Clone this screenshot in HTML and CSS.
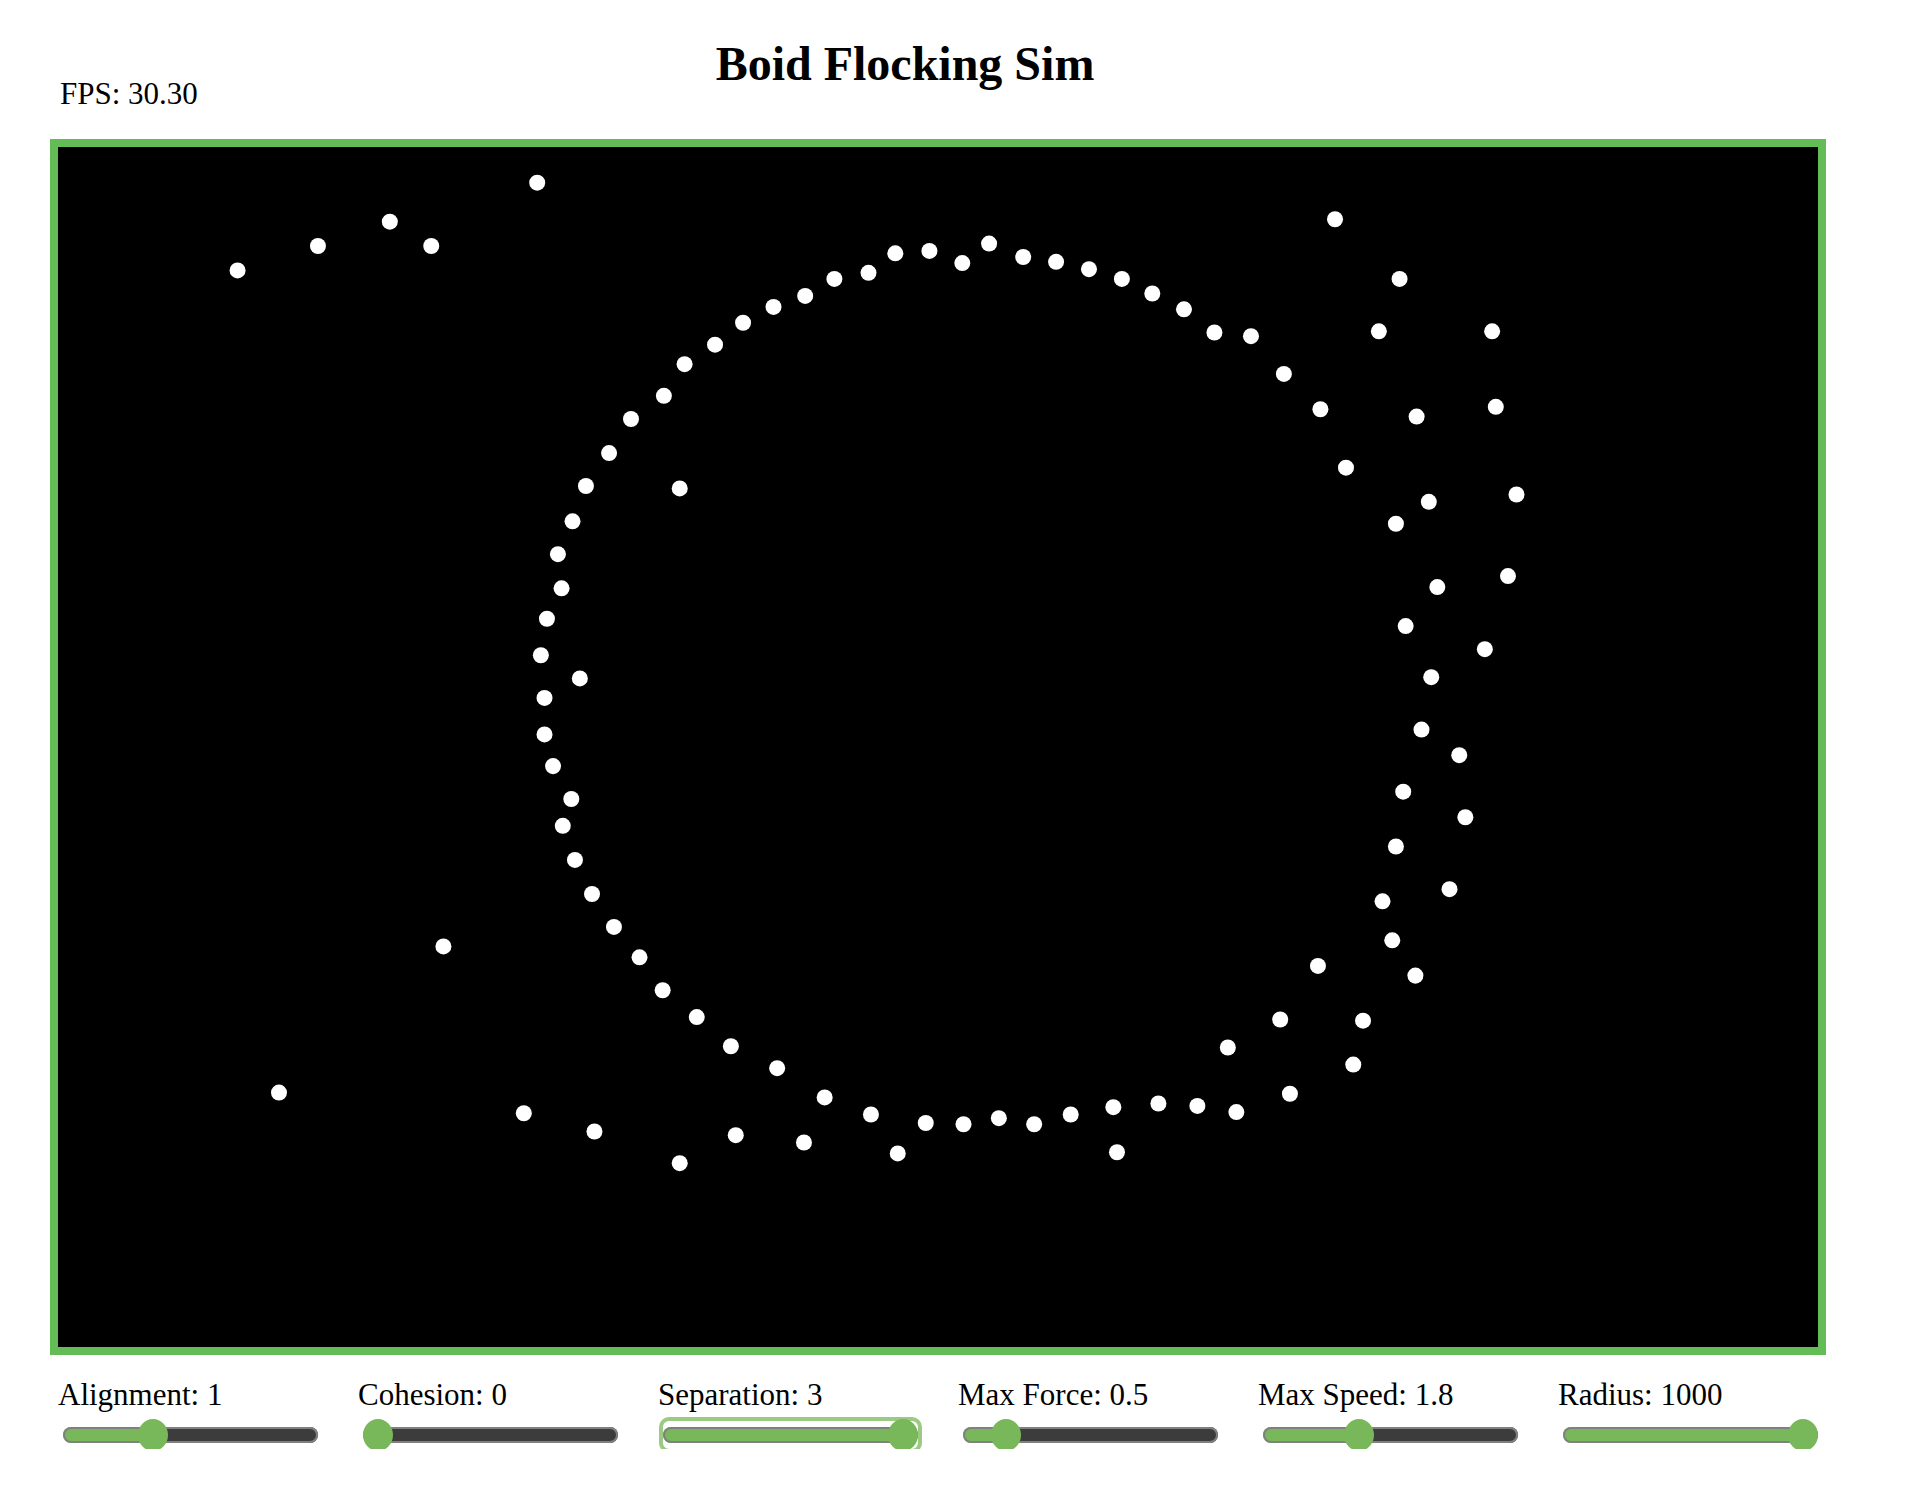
FILE: index.html
```html
<!DOCTYPE html>
<html lang="en">
<head>
    <meta charset="UTF-8">
    <meta name="viewport" content="width=device-width, initial-scale=1.0">
    <title>Boid Flocking Sim</title>
    <link rel="stylesheet" href="styles.css">
</head>
<body>
    <div class="header">
        <h1 id="title">Boid Flocking Sim</h1>
        <div id="fps">FPS: 30.30</div>
    </div>

    <div class="stage">
        <!-- snapshot of the flock, world units scaled to the canvas -->
        <svg id="boids" viewBox="47.6 120.7 1444.9 985.2" fill="#fff">
            <circle cx="195" cy="222" r="6.57"></circle>
            <circle cx="261" cy="202" r="6.57"></circle>
            <circle cx="320" cy="182" r="6.57"></circle>
            <circle cx="354" cy="202" r="6.57"></circle>
            <circle cx="441" cy="150" r="6.57"></circle>
            <circle cx="558" cy="401" r="6.57"></circle>
            <circle cx="364" cy="777" r="6.57"></circle>
            <circle cx="229" cy="897" r="6.57"></circle>
            <circle cx="430" cy="914" r="6.57"></circle>
            <circle cx="488" cy="929" r="6.57"></circle>
            <circle cx="558" cy="955" r="6.57"></circle>
            <circle cx="604" cy="932" r="6.57"></circle>
            <circle cx="660" cy="938" r="6.57"></circle>
            <circle cx="737" cy="947" r="6.57"></circle>
            <circle cx="917" cy="946" r="6.57"></circle>

            <circle cx="562" cy="299" r="6.57"></circle>
            <circle cx="587" cy="283" r="6.57"></circle>
            <circle cx="610" cy="265" r="6.57"></circle>
            <circle cx="635" cy="252" r="6.57"></circle>
            <circle cx="661" cy="243" r="6.57"></circle>
            <circle cx="685" cy="229" r="6.57"></circle>
            <circle cx="713" cy="224" r="6.57"></circle>
            <circle cx="735" cy="208" r="6.57"></circle>
            <circle cx="763" cy="206" r="6.57"></circle>
            <circle cx="790" cy="216" r="6.57"></circle>
            <circle cx="812" cy="200" r="6.57"></circle>
            <circle cx="840" cy="211" r="6.57"></circle>
            <circle cx="867" cy="215" r="6.57"></circle>
            <circle cx="894" cy="221" r="6.57"></circle>
            <circle cx="921" cy="229" r="6.57"></circle>
            <circle cx="946" cy="241" r="6.57"></circle>
            <circle cx="972" cy="254" r="6.57"></circle>
            <circle cx="997" cy="273" r="6.57"></circle>
            <circle cx="1027" cy="276" r="6.57"></circle>
            <circle cx="1054" cy="307" r="6.57"></circle>
            <circle cx="1084" cy="336" r="6.57"></circle>
            <circle cx="1105" cy="384" r="6.57"></circle>

            <circle cx="545" cy="325" r="6.57"></circle>
            <circle cx="518" cy="344" r="6.57"></circle>
            <circle cx="500" cy="372" r="6.57"></circle>
            <circle cx="481" cy="399" r="6.57"></circle>
            <circle cx="470" cy="428" r="6.57"></circle>
            <circle cx="458" cy="455" r="6.57"></circle>
            <circle cx="461" cy="483" r="6.57"></circle>
            <circle cx="449" cy="508" r="6.57"></circle>
            <circle cx="444" cy="538" r="6.57"></circle>
            <circle cx="476" cy="557" r="6.57"></circle>
            <circle cx="447" cy="573" r="6.57"></circle>
            <circle cx="447" cy="603" r="6.57"></circle>
            <circle cx="454" cy="629" r="6.57"></circle>
            <circle cx="469" cy="656" r="6.57"></circle>
            <circle cx="462" cy="678" r="6.57"></circle>
            <circle cx="472" cy="706" r="6.57"></circle>
            <circle cx="486" cy="734" r="6.57"></circle>
            <circle cx="504" cy="761" r="6.57"></circle>
            <circle cx="525" cy="786" r="6.57"></circle>
            <circle cx="544" cy="813" r="6.57"></circle>
            <circle cx="572" cy="835" r="6.57"></circle>
            <circle cx="600" cy="859" r="6.57"></circle>
            <circle cx="638" cy="877" r="6.57"></circle>
            <circle cx="677" cy="901" r="6.57"></circle>
            <circle cx="715" cy="915" r="6.57"></circle>
            <circle cx="760" cy="922" r="6.57"></circle>
            <circle cx="791" cy="923" r="6.57"></circle>
            <circle cx="820" cy="918" r="6.57"></circle>
            <circle cx="849" cy="923" r="6.57"></circle>
            <circle cx="879" cy="915" r="6.57"></circle>
            <circle cx="914" cy="909" r="6.57"></circle>
            <circle cx="951" cy="906" r="6.57"></circle>
            <circle cx="983" cy="908" r="6.57"></circle>
            <circle cx="1015" cy="913" r="6.57"></circle>
            <circle cx="1059" cy="898" r="6.57"></circle>

            <circle cx="1096" cy="180" r="6.57"></circle>
            <circle cx="1149" cy="229" r="6.57"></circle>
            <circle cx="1132" cy="272" r="6.57"></circle>
            <circle cx="1225" cy="272" r="6.57"></circle>
            <circle cx="1163" cy="342" r="6.57"></circle>
            <circle cx="1228" cy="334" r="6.57"></circle>
            <circle cx="1245" cy="406" r="6.57"></circle>
            <circle cx="1173" cy="412" r="6.57"></circle>
            <circle cx="1146" cy="430" r="6.57"></circle>
            <circle cx="1238" cy="473" r="6.57"></circle>
            <circle cx="1180" cy="482" r="6.57"></circle>
            <circle cx="1154" cy="514" r="6.57"></circle>
            <circle cx="1219" cy="533" r="6.57"></circle>
            <circle cx="1175" cy="556" r="6.57"></circle>
            <circle cx="1167" cy="599" r="6.57"></circle>
            <circle cx="1198" cy="620" r="6.57"></circle>
            <circle cx="1152" cy="650" r="6.57"></circle>
            <circle cx="1203" cy="671" r="6.57"></circle>
            <circle cx="1146" cy="695" r="6.57"></circle>
            <circle cx="1190" cy="730" r="6.57"></circle>
            <circle cx="1135" cy="740" r="6.57"></circle>
            <circle cx="1143" cy="772" r="6.57"></circle>
            <circle cx="1082" cy="793" r="6.57"></circle>
            <circle cx="1162" cy="801" r="6.57"></circle>
            <circle cx="1051" cy="837" r="6.57"></circle>
            <circle cx="1119" cy="838" r="6.57"></circle>
            <circle cx="1008" cy="860" r="6.57"></circle>
            <circle cx="1111" cy="874" r="6.57"></circle>
        </svg>
    </div>

    <div class="controls">
        <div class="control">
            <label for="alignment">Alignment: 1</label>
            <input type="range" id="alignment" min="0" max="3" step="0.1" value="1" style="--p: 0.333">
        </div>
        <div class="control">
            <label for="cohesion">Cohesion: 0</label>
            <input type="range" id="cohesion" min="0" max="3" step="0.1" value="0" style="--p: 0">
        </div>
        <div class="control">
            <label for="separation">Separation: 3</label>
            <input type="range" id="separation" class="focused" min="0" max="3" step="0.1" value="3" style="--p: 1">
        </div>
        <div class="control">
            <label for="max-force">Max Force: 0.5</label>
            <input type="range" id="max-force" min="0" max="4" step="0.1" value="0.5" style="--p: 0.125">
        </div>
        <div class="control">
            <label for="max-speed">Max Speed: 1.8</label>
            <input type="range" id="max-speed" min="0" max="5" step="0.1" value="1.8" style="--p: 0.36">
        </div>
        <div class="control">
            <label for="radius">Radius: 1000</label>
            <input type="range" id="radius" min="0" max="1000" step="10" value="1000" style="--p: 1">
        </div>
    </div>
</body>
</html>
```

FILE: styles.css
```css
body {
    margin: 0;
    background: #fff;
    color: #000;
    font-family: "Liberation Serif", "Times New Roman", serif;
}

.header {
    display: grid;
    width: 1810px;
    height: 76px;
    padding-top: 36px;
}

#title {
    grid-area: 1 / 1;
    align-self: start;
    justify-self: center;
    margin: 0;
    font-size: 48px;
    line-height: 56px;
    font-weight: bold;
}

#fps {
    grid-area: 1 / 1;
    align-self: end;
    justify-self: start;
    padding-left: 60px;
    font-size: 31px;
    line-height: 36px;
}

.stage {
    width: 1760px;
    height: 1200px;
    margin: 27px 0 0 50px;
    border: 8px solid #64bc56;
    background: #000;
}

#boids {
    display: block;
    width: 100%;
    height: 100%;
}

.controls {
    display: flex;
    margin: 22px 0 0 58px;
}

.control {
    display: flex;
    flex-direction: column;
    align-items: flex-start;
    gap: 8px;
    width: 300px;
}

.control label {
    font-size: 31px;
    line-height: 36px;
}

.control input[type="range"] {
    -webkit-appearance: none;
    appearance: none;
    width: 255px;
    height: 28px;
    margin: 0 0 0 5px;
    padding: 0;
    background: transparent;
    border-radius: 6px;
}

.control input[type="range"]::-webkit-slider-runnable-track {
    height: 16px;
    border-radius: 8px;
    box-shadow: inset 0 0 0 2px #808080;
    background: linear-gradient(to right,
        #78b85a calc(var(--p) * (100% - 30px) + 15px),
        #3c3c3c 0);
}

.control input[type="range"]::-webkit-slider-thumb {
    -webkit-appearance: none;
    width: 30px;
    height: 32px;
    margin-top: -8px;
    border: none;
    border-radius: 50%;
    background: #78b85a;
}

.control input.focused {
    outline: 4px solid rgba(120, 184, 90, 0.75);
    outline-offset: 0;
}
```
